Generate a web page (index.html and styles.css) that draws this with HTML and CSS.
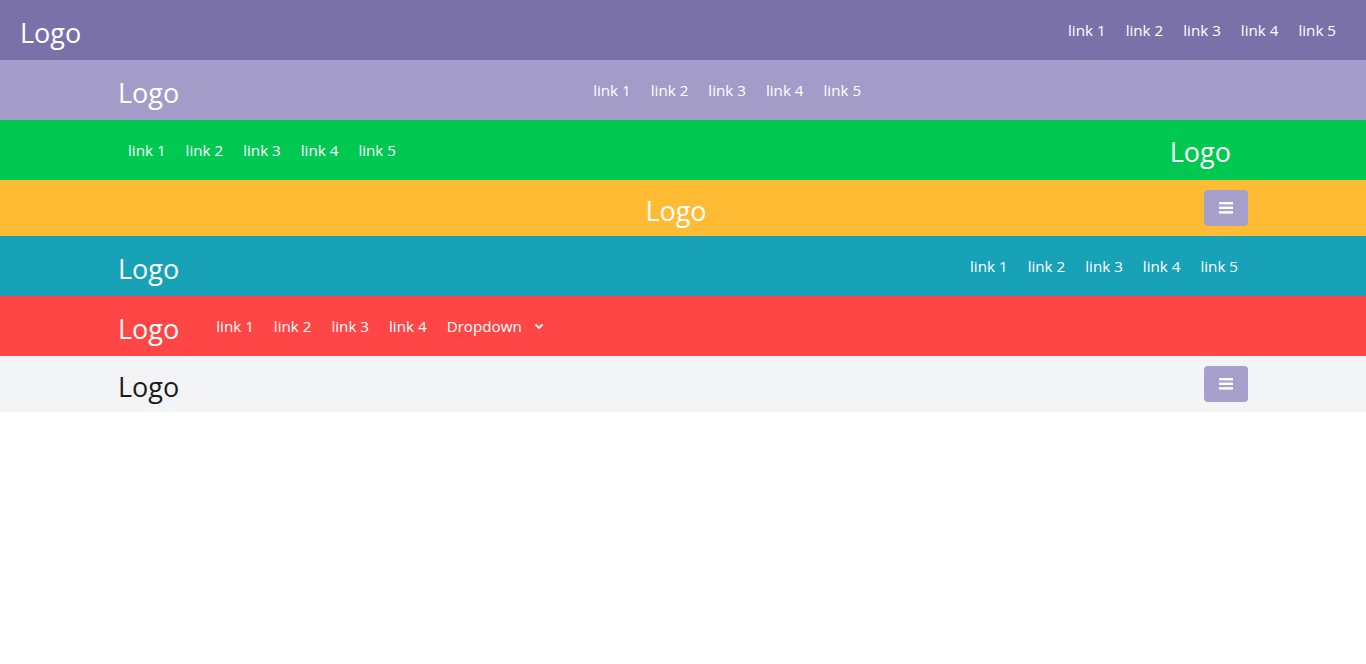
FILE: index.html
```html
<!DOCTYPE html>
<html lang="en">
<head>
    <meta charset="UTF-8">
    <meta name="viewport" content="width=device-width, initial-scale=1.0">
    <title>Navbars</title>
    <link rel="stylesheet" href="styles.css">
</head>
<body>
    <!-- full width, logo left, links right -->
    <nav class="navbar nav-purple">
        <div class="bar bar-fluid">
            <a class="logo" href="#">Logo</a>
            <ul class="links">
                <li><a href="#">link 1</a></li>
                <li><a href="#">link 2</a></li>
                <li><a href="#">link 3</a></li>
                <li><a href="#">link 4</a></li>
                <li><a href="#">link 5</a></li>
            </ul>
        </div>
    </nav>

    <!-- logo left, links centered -->
    <nav class="navbar nav-lilac">
        <div class="bar">
            <a class="logo" href="#">Logo</a>
            <ul class="links links-mid">
                <li><a href="#">link 1</a></li>
                <li><a href="#">link 2</a></li>
                <li><a href="#">link 3</a></li>
                <li><a href="#">link 4</a></li>
                <li><a href="#">link 5</a></li>
            </ul>
            <span></span>
        </div>
    </nav>

    <!-- links left, logo right -->
    <nav class="navbar nav-green">
        <div class="bar">
            <ul class="links">
                <li><a href="#">link 1</a></li>
                <li><a href="#">link 2</a></li>
                <li><a href="#">link 3</a></li>
                <li><a href="#">link 4</a></li>
                <li><a href="#">link 5</a></li>
            </ul>
            <a class="logo logo-end" href="#">Logo</a>
        </div>
    </nav>

    <!-- centered logo with toggler -->
    <nav class="navbar nav-yellow">
        <div class="bar bar-short">
            <span class="pad"></span>
            <a class="logo" href="#">Logo</a>
            <button class="toggler" aria-label="menu">
                <svg width="14" height="12" viewBox="0 0 14 12"><rect y="0" width="14" height="2.4"/><rect y="4.6" width="14" height="2.4"/><rect y="9.2" width="14" height="2.4"/></svg>
            </button>
        </div>
    </nav>

    <!-- logo left, links right, boxed -->
    <nav class="navbar nav-teal">
        <div class="bar">
            <a class="logo" href="#">Logo</a>
            <ul class="links">
                <li><a href="#">link 1</a></li>
                <li><a href="#">link 2</a></li>
                <li><a href="#">link 3</a></li>
                <li><a href="#">link 4</a></li>
                <li><a href="#">link 5</a></li>
            </ul>
        </div>
    </nav>

    <!-- logo with links and dropdown -->
    <nav class="navbar nav-red">
        <div class="bar bar-start">
            <a class="logo" href="#">Logo</a>
            <ul class="links links-near">
                <li><a href="#">link 1</a></li>
                <li><a href="#">link 2</a></li>
                <li><a href="#">link 3</a></li>
                <li><a href="#">link 4</a></li>
                <li><a class="dropdown" href="#">Dropdown<svg width="10" height="7" viewBox="0 0 10 7"><polyline points="1.5,1.5 5,5 8.5,1.5" fill="none" stroke="currentColor" stroke-width="1.8"/></svg></a></li>
            </ul>
        </div>
    </nav>

    <!-- light bar with toggler -->
    <nav class="navbar nav-light">
        <div class="bar bar-short">
            <a class="logo" href="#">Logo</a>
            <button class="toggler" aria-label="menu">
                <svg width="14" height="12" viewBox="0 0 14 12"><rect y="0" width="14" height="2.4"/><rect y="4.6" width="14" height="2.4"/><rect y="9.2" width="14" height="2.4"/></svg>
            </button>
        </div>
    </nav>
</body>
</html>
```

FILE: styles.css
```css
body {
    margin: 0;
    font-family: "Open Sans", "Noto Sans", Arial, sans-serif;
    background: #fff;
}
a {
    text-decoration: none;
    color: inherit;
}
.navbar {
    color: #fff;
}
.bar {
    width: 1130px;
    margin: 0 auto;
    height: 60px;
    display: flex;
    align-items: center;
    justify-content: space-between;
}
.bar-fluid {
    width: auto;
    padding: 0 20px;
}
.bar-short {
    height: 56px;
}
.bar-start {
    justify-content: flex-start;
}
.logo {
    font-size: 27px;
    line-height: 1;
    padding-top: 4px;
}
.logo-end {
    margin-right: 17px;
    padding-top: 2px;
}
.links {
    list-style: none;
    margin: 0;
    padding: 0;
    display: flex;
    font-size: 15.2px;
}
.links a {
    display: block;
    padding: 8px 10px;
}
.links-mid {
    padding-left: 27px;
}
.links-near {
    margin-left: 27px;
}
.pad {
    width: 30px;
}
.dropdown svg {
    margin-left: 12px;
    vertical-align: 2px;
}
.toggler {
    width: 44px;
    height: 36px;
    border: none;
    border-radius: 4px;
    background: #a8a0cc;
    display: flex;
    align-items: center;
    justify-content: center;
    padding: 0;
    cursor: pointer;
}
.toggler svg {
    fill: #fff;
}
.nav-purple { background: #7a71a9; }
.nav-lilac { background: #a49cc8; }
.nav-green { background: #00c851; }
.nav-yellow { background: #ffbb33; }
.nav-teal { background: #17a2b8; }
.nav-red { background: #ff4646; }
.nav-light {
    background: #f3f4f6;
    color: #1b1b1b;
}
```
